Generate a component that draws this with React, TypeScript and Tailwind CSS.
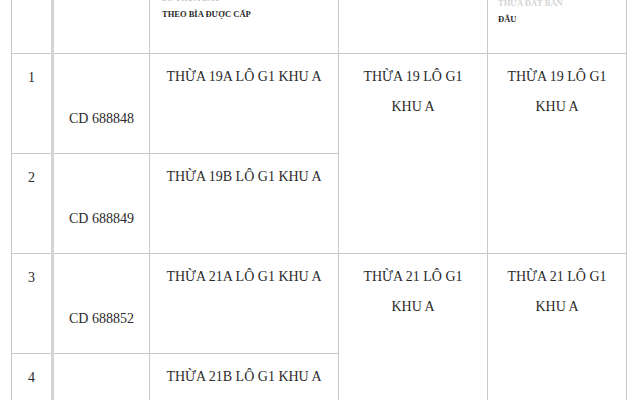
import React from "react";

const serif = { fontFamily: '"Liberation Serif", "DejaVu Serif", serif' };

function Body({ children, cls = "" }: { children?: React.ReactNode; cls?: string }) {
  return (
    <td className={`border border-[#c9c9c9] align-top text-center text-[14px] leading-[30px] text-[#2a2a2a] ${cls}`}>
      {children}
    </td>
  );
}

export default function App() {
  const rows = [
    { n: "1", cd: "CD 688848", t: "THỪA 19A LÔ G1 KHU A" },
    { n: "2", cd: "CD 688849", t: "THỪA 19B LÔ G1 KHU A" },
    { n: "3", cd: "CD 688852", t: "THỪA 21A LÔ G1 KHU A" },
    { n: "4", cd: "", t: "THỪA 21B LÔ G1 KHU A" },
  ];
  return (
    <div className="w-[640px] h-[400px] overflow-hidden bg-white" style={serif}>
      <table className="ml-[11px] mt-[-20px] border-collapse table-fixed w-[615px]">
        <colgroup>
          <col className="w-[41px]" />
          <col className="w-[97px]" />
          <col className="w-[189px]" />
          <col className="w-[149px]" />
          <col className="w-[139px]" />
        </colgroup>
        <thead>
          <tr className="h-[73px]">
            <th className="border border-[#c9c9c9] border-r-[3px] border-r-[#d4d4d4] align-top"></th>
            <th className="border border-[#c9c9c9] align-top pt-[1px] text-[9px] leading-[16px] font-bold text-[#2a2a2a] text-left pl-[14px]">
              <div className="opacity-40">SỐ</div>
            </th>
            <th className="border border-[#c9c9c9] align-top pt-[9px] pl-[12px] text-left text-[8.5px] leading-[16px] font-bold text-[#2a2a2a]">
              <div className="opacity-30">SỐ THỬA ĐẤT</div>
              <div>THEO BÌA ĐƯỢC CẤP</div>
            </th>
            <th className="border border-[#c9c9c9] align-top pt-[1px] pl-[12px] text-left text-[8.5px] leading-[16px] font-bold text-[#2a2a2a]">
              <div className="opacity-30">SỐ THỬA ĐẤT GỐC</div>
            </th>
            <th className="border border-[#c9c9c9] align-top pt-[14px] pl-[10px] text-left text-[8.5px] leading-[16px] font-bold text-[#2a2a2a]">
              <div className="opacity-20">THỬA ĐẤT BAN</div>
              <div>ĐÂU</div>
            </th>
          </tr>
        </thead>
        <tbody>
          {rows.map((r, i) => (
            <tr key={i} className="h-[100px]">
              <Body cls="pt-[9px] border-r-[3px] border-r-[#d4d4d4]">{r.n}</Body>
              <Body cls="pt-[50px]">{r.cd}</Body>
              <Body cls="pt-[8px]">{r.t}</Body>
              {i % 2 === 0 && (
                <>
                  <td rowSpan={2} className="border border-[#c9c9c9] align-top text-center text-[14px] leading-[30px] text-[#2a2a2a] pt-[8px]">
                    <div>{i === 0 ? "THỪA 19 LÔ G1" : "THỪA 21 LÔ G1"}</div>
                    <div>KHU A</div>
                  </td>
                  <td rowSpan={2} className="border border-[#c9c9c9] align-top text-center text-[14px] leading-[30px] text-[#2a2a2a] pt-[8px]">
                    <div>{i === 0 ? "THỪA 19 LÔ G1" : "THỪA 21 LÔ G1"}</div>
                    <div>KHU A</div>
                  </td>
                </>
              )}
            </tr>
          ))}
        </tbody>
      </table>
    </div>
  );
}
